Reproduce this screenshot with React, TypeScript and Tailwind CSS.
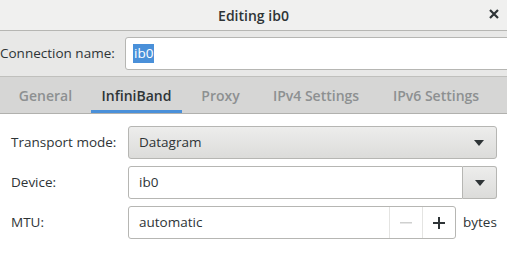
import React from "react";

const font = { fontFamily: '"Open Sans", "Noto Sans", sans-serif' };

function Arrow() {
  return (
    <svg width="10" height="6" viewBox="0 0 10 6">
      <path d="M0 0 L10 0 L5 6 Z" fill="#2e3436" />
    </svg>
  );
}

export default function App() {
  return (
    <div
      className="w-[507px] h-[270px] overflow-hidden bg-white text-[13.5px] text-[#2e3436] flex flex-col"
      style={font}
    >
      {/* title bar */}
      <div className="h-[31px] shrink-0 bg-[#f0f0ef] border-b border-[#b6b6b3] flex items-center relative">
        <div className="flex-1 text-center font-semibold text-[14px] text-[#2e3436]">Editing ib0</div>
        <div className="absolute right-[4px] top-[5px] w-[18px] h-[18px] flex items-center justify-center">
          <svg width="10" height="10" viewBox="0 0 10 10">
            <path d="M1 1 L9 9 M9 1 L1 9" stroke="#2e3436" strokeWidth="2.2" />
          </svg>
        </div>
      </div>

      {/* connection name row */}
      <div className="h-[46px] shrink-0 bg-[#e8e8e7] border-b border-[#c0c0bd] flex items-center">
        <div className="w-[125px] shrink-0 text-[#2e3436]">Connection name:</div>
        <div className="h-[33px] w-[400px] shrink-0 bg-white border border-[#b6b6b3] rounded-[3px] flex items-center pl-[7px]">
          <span className="bg-[#4a90d9] text-white leading-[19px] px-[1px]">ib0</span>
        </div>
      </div>

      {/* tabs */}
      <div className="h-[37px] shrink-0 bg-[#d6d6d5] border-b border-[#b1b1ae] flex items-stretch font-semibold text-[14px]">
        <div className="w-[91px] flex items-center justify-center text-[#8d9091]">General</div>
        <div className="w-[91px] flex items-center justify-center text-[#2e3436] border-b-[3px] border-[#4a90d9] pt-[3px]">InfiniBand</div>
        <div className="w-[77px] flex items-center justify-center text-[#8d9091]">Proxy</div>
        <div className="w-[114px] flex items-center justify-center text-[#8d9091]">IPv4 Settings</div>
        <div className="w-[126px] flex items-center justify-center text-[#8d9091]">IPv6 Settings</div>
      </div>

      {/* content */}
      <div className="flex flex-col gap-[7px] pt-[12px] pl-[11px]">
        <div className="flex items-center h-[33px]">
          <div className="w-[117px] shrink-0">Transport mode:</div>
          <div className="w-[369px] h-[33px] rounded-[3px] border border-[#b6b6b3] bg-gradient-to-b from-[#ededec] to-[#dcdcda] flex items-center justify-between pl-[10px] pr-[12px]">
            <span>Datagram</span>
            <Arrow />
          </div>
        </div>
        <div className="flex items-center h-[33px]">
          <div className="w-[117px] shrink-0">Device:</div>
          <div className="w-[369px] h-[33px] flex">
            <div className="flex-1 h-full bg-white border border-[#b6b6b3] rounded-l-[3px] flex items-center pl-[10px]">ib0</div>
            <div className="w-[34px] h-full border border-l-0 border-[#b6b6b3] rounded-r-[3px] bg-gradient-to-b from-[#ededec] to-[#dcdcda] flex items-center justify-center">
              <Arrow />
            </div>
          </div>
        </div>
        <div className="flex items-center h-[33px]">
          <div className="w-[117px] shrink-0">MTU:</div>
          <div className="w-[328px] h-[33px] flex border border-[#b6b6b3] rounded-[3px] bg-white">
            <div className="flex-1 flex items-center pl-[10px]">automatic</div>
            <div className="w-[33px] border-l border-[#e4e4e2] flex items-center justify-center">
              <svg width="12" height="2" viewBox="0 0 12 2"><rect width="12" height="1.5" fill="#cfd0cf" /></svg>
            </div>
            <div className="w-[33px] border-l border-[#e4e4e2] flex items-center justify-center">
              <svg width="12" height="12" viewBox="0 0 12 12"><path d="M6 0 V12 M0 6 H12" stroke="#2e3436" strokeWidth="2" /></svg>
            </div>
          </div>
          <div className="pl-[7px]">bytes</div>
        </div>
      </div>
    </div>
  );
}
